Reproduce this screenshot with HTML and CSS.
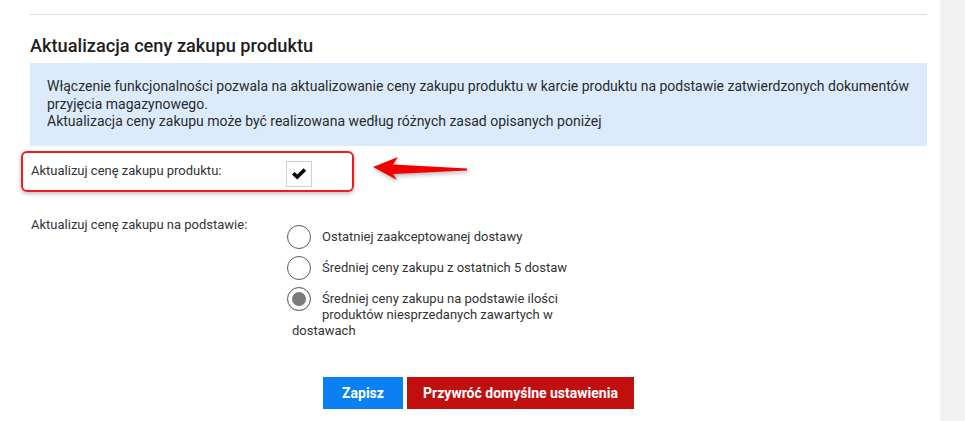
FILE: index.html
```html
<!DOCTYPE html>
<html lang="pl">
<head>
<meta charset="utf-8">
<link rel="stylesheet" href="styles.css">
</head>
<body>
<div class="page">
  <main class="main">
    <hr class="sep">
    <h2 class="title">Aktualizacja ceny zakupu produktu</h2>
    <div class="info">
      Włączenie funkcjonalności pozwala na aktualizowanie ceny zakupu produktu w karcie produktu na podstawie zatwierdzonych dokumentów przyjęcia magazynowego.<br>
      Aktualizacja ceny zakupu może być realizowana według różnych zasad opisanych poniżej
    </div>
    <div class="highlight-wrap">
      <div class="highlight">
        <span class="label">Aktualizuj cenę zakupu produktu:</span>
        <span class="checkbox">
          <svg width="16" height="14" viewBox="0 0 16 14"><path d="M1 7.5 L3.6 5 L6.2 7.6 L12.6 1.2 L15.2 3.8 L6.2 12.6 Z" fill="#000"/></svg>
        </span>
      </div>
      <svg class="arrow" width="100" height="30" viewBox="0 0 100 30"><path d="M2 10 L27 0 L22 7.5 L96 11.5 L96 13.5 L22 17 L26 23 Z" fill="#f20000"/></svg>
    </div>
    <div class="row">
      <span class="label">Aktualizuj cenę zakupu na podstawie:</span>
      <div class="options">
        <div class="option"><span class="radio"></span>Ostatniej zaakceptowanej dostawy</div>
        <div class="option"><span class="radio"></span>Średniej ceny zakupu z ostatnich 5 dostaw</div>
        <div class="option"><span class="radio checked"></span>Średniej ceny zakupu na podstawie ilości produktów niesprzedanych zawartych w dostawach</div>
      </div>
    </div>
    <div class="buttons">
      <button class="btn btn-blue">Zapisz</button>
      <button class="btn btn-red">Przywróć domyślne ustawienia</button>
    </div>
  </main>
  <aside class="side"></aside>
</div>
</body>
</html>
```

FILE: styles.css
```css
* { box-sizing: border-box; }
html, body { margin: 0; padding: 0; }
body {
  font-family: Roboto, "Liberation Sans", Arial, sans-serif;
  color: #333;
  background: #fff;
}
.page {
  display: flex;
  min-height: 421px;
}
.main {
  width: 940px;
  padding: 14px 13px 0 30px;
}
.side {
  flex: 1;
  background: #f1f1f1;
}
.sep {
  margin: 0;
  border: 0;
  border-top: 1px solid #dcdcdc;
}
.title {
  margin: 20px 0 6px;
  font-size: 18.2px;
  line-height: 22px;
  font-weight: 500;
  color: #1e1e1e;
}
.info {
  background: #dcebfc;
  padding: 15px 17px 15px 17px;
  font-size: 14px;
  line-height: 17.5px;
  color: #2a2a2a;
}
.highlight-wrap {
  display: flex;
  align-items: center;
  margin: 5px 0 0 -9px;
}
.highlight {
  display: flex;
  align-items: flex-start;
  width: 333px;
  height: 41px;
  border: 2px solid #ee1c1c;
  border-radius: 6px;
  padding: 8px 0 0 8px;
  box-shadow: 0 2px 4px rgba(0,0,0,0.25);
}
.label {
  width: 255px;
  flex: none;
  font-size: 13px;
  line-height: 18px;
  color: #333;
}
.highlight .label { padding-top: 1px; }
.checkbox {
  width: 26px;
  height: 26px;
  border: 1px solid #cfcfcf;
  display: flex;
  align-items: center;
  justify-content: center;
  background: #fff;
}
.arrow {
  margin-left: 17px;
  margin-top: 2px;
  filter: drop-shadow(1px 2px 2px rgba(0,0,0,0.3));
}
.row {
  display: flex;
  align-items: flex-start;
  margin-top: 24px;
  padding-left: 1px;
}
.options {
  padding-top: 13px;
  width: 290px;
  font-size: 13px;
  line-height: 16px;
  color: #333;
}
.option {
  display: flow-root;
  padding-left: 6px;
  margin-bottom: 11px;
}
.radio {
  float: left;
  width: 24px;
  height: 24px;
  margin: -4px 11px 0 -5px;
  border: 1px solid #5a5a5a;
  border-radius: 50%;
  background: #fff;
}
.radio.checked {
  border-color: #6a6a6a;
  background: #7b7b7b;
  box-shadow: inset 0 0 0 4px #fff;
}
.buttons {
  display: flex;
  justify-content: center;
  gap: 4px;
  margin-top: 27px;
}
.btn {
  border: 0;
  height: 32px;
  padding: 0 8px;
  white-space: nowrap;
  font-family: Roboto, "Liberation Sans", Arial, sans-serif;
  font-size: 14px;
  font-weight: 700;
  color: #fff;
  cursor: pointer;
}
.btn-blue { background: #0b80f3; width: 80px; }
.btn-red { background: #c10f10; width: 227px; }
```
